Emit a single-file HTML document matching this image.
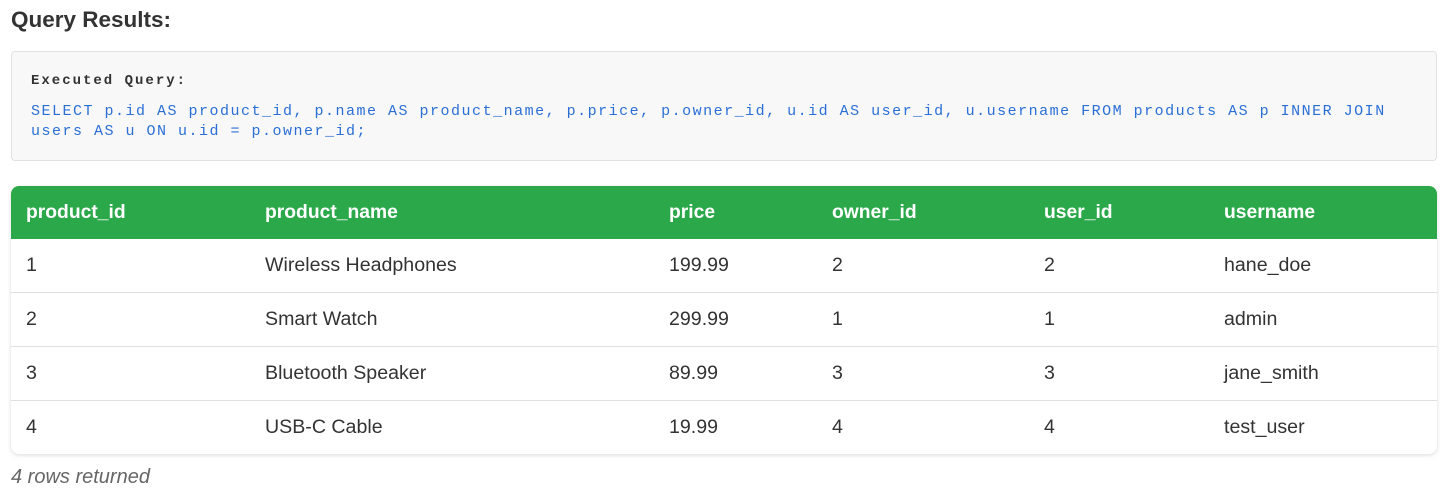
<!DOCTYPE html>
<html><head><meta charset="utf-8"><style>
body{margin:0;background:#fff;font-family:"Liberation Sans",Arial,sans-serif;color:#333;width:1449px;height:494px;overflow:hidden;position:relative}
h2{position:absolute;left:11px;top:7px;margin:0;font-size:22.5px;font-weight:bold;color:#333}
.q{position:absolute;left:11px;top:51px;width:1424px;height:108px;background:#f8f8f8;border:1px solid #e1e1e1;border-radius:4px}
.q .l{position:absolute;left:19px;top:21px;font-family:"Liberation Mono",monospace;font-weight:bold;font-size:14px;letter-spacing:2.0px;color:#333}
.q .c{position:absolute;left:19px;top:50px;font-family:"Liberation Mono",monospace;font-size:15px;letter-spacing:1.5px;line-height:20px;color:#2b6fd6;white-space:pre}
.t{position:absolute;left:11px;top:186px;width:1426px;height:268px;border-radius:8px;overflow:hidden;box-shadow:0 1px 4px rgba(0,0,0,.15)}
table{border-collapse:collapse;width:1426px;table-layout:fixed}
th{background:#2ba84a;color:#fff;font-weight:bold;font-size:19.3px;text-align:left;height:53px;padding:0 0 0 15px}
td{font-size:19.6px;height:53px;padding:0 0 0 15px;border-top:1px solid #e0e0e0;color:#333}
tr:nth-child(2) td{border-top:none}
.f{position:absolute;left:11px;top:466px;font-style:italic;font-size:20px;color:#666}
</style></head><body>
<h2>Query Results:</h2>
<div class="q"><div class="l">Executed Query:</div><div class="c">SELECT p.id AS product_id, p.name AS product_name, p.price, p.owner_id, u.id AS user_id, u.username FROM products AS p INNER JOIN
users AS u ON u.id = p.owner_id;</div></div>
<div class="t"><table>
<colgroup><col style="width:239px"><col style="width:404px"><col style="width:163px"><col style="width:212px"><col style="width:180px"><col></colgroup>
<tr><th>product_id</th><th>product_name</th><th>price</th><th>owner_id</th><th>user_id</th><th>username</th></tr>
<tr><td>1</td><td>Wireless Headphones</td><td>199.99</td><td>2</td><td>2</td><td>hane_doe</td></tr>
<tr><td>2</td><td>Smart Watch</td><td>299.99</td><td>1</td><td>1</td><td>admin</td></tr>
<tr><td>3</td><td>Bluetooth Speaker</td><td>89.99</td><td>3</td><td>3</td><td>jane_smith</td></tr>
<tr><td>4</td><td>USB-C Cable</td><td>19.99</td><td>4</td><td>4</td><td>test_user</td></tr>
</table></div>
<div class="f">4 rows returned</div>
</body></html>
